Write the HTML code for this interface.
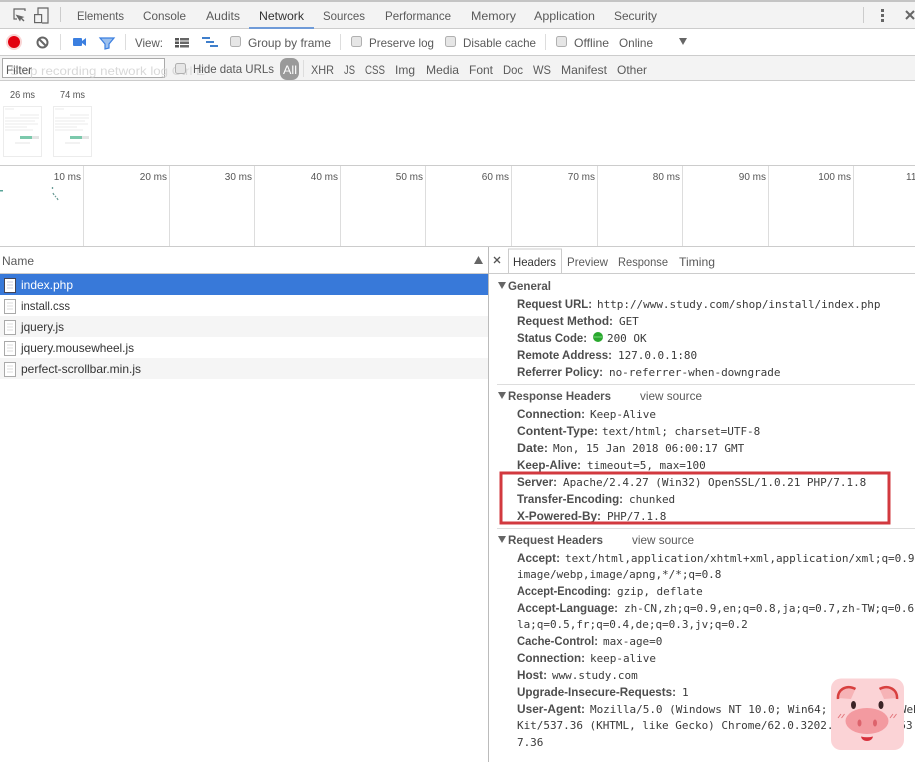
<!DOCTYPE html>
<html><head><meta charset="utf-8"><style>
html,body{margin:0;padding:0;background:#fff;width:915px;height:762px;overflow:hidden}
svg{display:block;filter:blur(.3px)}
text{font-family:"Liberation Sans",sans-serif;font-size:12px;fill:#4a4a4a}
.t{fill:#5a5a5a}
.d{fill:#333}
.k{font-weight:bold;fill:#4d4d4d;font-size:12px}
.v{font-family:"DejaVu Sans Mono",monospace;font-size:11px;fill:#3a3a3a;letter-spacing:-.03px}
.h{font-weight:bold;fill:#555}
.l{font-size:10px;fill:#555}
.cb{fill:#e6e6e6;stroke:#b0b0b0}
</style></head><body>
<svg width="915" height="762" viewBox="0 0 915 762" xmlns="http://www.w3.org/2000/svg">
<rect width="915" height="762" fill="#fff"/>
<!-- tab bar -->
<rect y="0" width="915" height="28" fill="#f3f3f3"/>
<rect y="0" width="915" height="2" fill="#c4c4c4"/>
<rect y="28" width="915" height="1" fill="#ccc"/>
<path d="M14 15V9h11v2M14 15v4h3" fill="none" stroke="#666" stroke-width="1.2"/>
<path d="M15.500 14.500l4.500 7 1-2.500 2.500 2.500 1-1-2.500-2.500 2.500-1z" fill="#666"/>
<path d="M38 14V8h10v15H42" fill="none" stroke="#666" stroke-width="1.2"/><rect x="34.600" y="14.600" width="7" height="8" fill="none" stroke="#666" stroke-width="1.2"/>
<rect x="60" y="7" width="1" height="15" fill="#ccc"/>
<text class="t" x="77" y="20" textLength="47" lengthAdjust="spacingAndGlyphs">Elements</text>
<text class="t" x="143" y="20" textLength="43" lengthAdjust="spacingAndGlyphs">Console</text>
<text class="t" x="206" y="20" textLength="34" lengthAdjust="spacingAndGlyphs">Audits</text>
<text class="d" x="259" y="20" textLength="45" lengthAdjust="spacingAndGlyphs">Network</text>
<text class="t" x="323" y="20" textLength="42" lengthAdjust="spacingAndGlyphs">Sources</text>
<text class="t" x="385" y="20" textLength="66" lengthAdjust="spacingAndGlyphs">Performance</text>
<text class="t" x="471" y="20" textLength="45" lengthAdjust="spacingAndGlyphs">Memory</text>
<text class="t" x="534" y="20" textLength="61" lengthAdjust="spacingAndGlyphs">Application</text>
<text class="t" x="614" y="20" textLength="43" lengthAdjust="spacingAndGlyphs">Security</text>
<rect x="249" y="27" width="65" height="2" fill="#6f9bd8"/>
<rect x="863" y="7" width="1" height="16" fill="#ccc"/>
<rect x="881" y="9" width="3" height="3" fill="#666"/><rect x="881" y="14" width="3" height="3" fill="#666"/><rect x="881" y="19" width="3" height="3" fill="#666"/>
<path d="M906 11l8 8M914 11l-8 8" stroke="#666" stroke-width="2"/>
<!-- row 2 -->
<circle cx="14" cy="42" r="8" fill="#f9d5d5"/><circle cx="14" cy="42" r="6" fill="#e2000f"/>
<circle cx="42.500" cy="42.500" r="5" fill="none" stroke="#666" stroke-width="2"/><path d="M39 39l7 7" stroke="#666" stroke-width="2"/>
<rect x="60" y="34" width="1" height="16" fill="#ddd"/>
<rect x="73" y="38" width="9" height="8" rx="1" fill="#3b7fe0"/><path d="M82 41l4-3v8l-4-3z" fill="#3b7fe0"/>
<path d="M100 38h14l-5 6v4l-4 1v-5z" fill="#9cc0ee" stroke="#3b7fe0" stroke-width="1.2"/>
<rect x="125" y="34" width="1" height="16" fill="#ddd"/>
<text class="t" x="135" y="47" textLength="28" lengthAdjust="spacingAndGlyphs">View:</text>
<path d="M175 38h4v2.500h-4zM175 41.500h4v2.500h-4zM175 45h4v2.500h-4z" fill="#555"/><path d="M180 38h9v2.500h-9zM180 41.500h9v2.500h-9zM180 45h9v2.500h-9z" fill="#666"/>
<path d="M202 37h8v2h-8zM206 41h8v2h-8zM210 45h8v2h-8z" fill="#3f7fcc"/>
<rect x="230.500" y="36.500" width="10" height="10" rx="2" class="cb"/>
<text class="t" x="248" y="47" textLength="83" lengthAdjust="spacingAndGlyphs">Group by frame</text>
<rect x="340" y="34" width="1" height="16" fill="#ddd"/>
<rect x="351.500" y="36.500" width="10" height="10" rx="2" class="cb"/>
<text class="t" x="369" y="47" textLength="65" lengthAdjust="spacingAndGlyphs">Preserve log</text>
<rect x="445.500" y="36.500" width="10" height="10" rx="2" class="cb"/>
<text class="t" x="463" y="47" textLength="73" lengthAdjust="spacingAndGlyphs">Disable cache</text>
<rect x="545" y="34" width="1" height="16" fill="#ddd"/>
<rect x="556.500" y="36.500" width="10" height="10" rx="2" class="cb"/>
<text class="t" x="574" y="47" textLength="35" lengthAdjust="spacingAndGlyphs">Offline</text>
<text class="t" x="619" y="47" textLength="34" lengthAdjust="spacingAndGlyphs">Online</text>
<path d="M679 38h8l-4 7z" fill="#666"/>
<rect y="55" width="915" height="1" fill="#ccc"/>
<!-- row 3 -->
<rect y="56" width="915" height="24" fill="#f3f3f3"/>
<rect y="80" width="915" height="1" fill="#ccc"/>
<rect x="2.500" y="58.500" width="162" height="19" fill="#fff" stroke="#aaa"/>
<text x="10" y="75" style="fill:#d8d8d8" textLength="195" lengthAdjust="spacingAndGlyphs">Stop recording network log   Ctrl E</text>
<text class="t" x="6" y="74" textLength="26" lengthAdjust="spacingAndGlyphs">Filter</text>
<rect x="175.500" y="63.500" width="10" height="10" rx="2" class="cb"/>
<text class="t" x="193" y="73" textLength="81" lengthAdjust="spacingAndGlyphs">Hide data URLs</text>
<rect x="280" y="58" width="19" height="22" rx="7" fill="#9a9a9a"/>
<text x="283" y="74" style="fill:#fff" textLength="14" lengthAdjust="spacingAndGlyphs">All</text>
<rect x="303" y="60" width="1" height="17" fill="#ddd"/>
<text class="t" x="311" y="74" textLength="23" lengthAdjust="spacingAndGlyphs">XHR</text>
<text class="t" x="344" y="74" textLength="11" lengthAdjust="spacingAndGlyphs">JS</text>
<text class="t" x="365" y="74" textLength="20" lengthAdjust="spacingAndGlyphs">CSS</text>
<text class="t" x="395" y="74" textLength="20" lengthAdjust="spacingAndGlyphs">Img</text>
<text class="t" x="426" y="74" textLength="33" lengthAdjust="spacingAndGlyphs">Media</text>
<text class="t" x="469" y="74" textLength="24" lengthAdjust="spacingAndGlyphs">Font</text>
<text class="t" x="503" y="74" textLength="20" lengthAdjust="spacingAndGlyphs">Doc</text>
<text class="t" x="533" y="74" textLength="18" lengthAdjust="spacingAndGlyphs">WS</text>
<text class="t" x="561" y="74" textLength="46" lengthAdjust="spacingAndGlyphs">Manifest</text>
<text class="t" x="617" y="74" textLength="30" lengthAdjust="spacingAndGlyphs">Other</text>
<!-- film strip -->
<text class="l" x="10" y="98" textLength="25" lengthAdjust="spacingAndGlyphs">26 ms</text>
<text class="l" x="60" y="98" textLength="25" lengthAdjust="spacingAndGlyphs">74 ms</text>
<rect x="3.500" y="106.500" width="38" height="50" fill="#fff" stroke="#ececec"/>
<path d="M5 109h9M20 115h19M5 118h34M5 121h30M5 124h33M5 127h22M5 130h28" stroke="#ebebeb"/>
<rect x="20" y="136" width="12" height="3" fill="#7cc9ac"/><rect x="32" y="136" width="7" height="3" fill="#e4e4e4"/>
<path d="M15 143h15" stroke="#e4e4e4"/>
<rect x="53.500" y="106.500" width="38" height="50" fill="#fff" stroke="#ececec"/>
<path d="M55 109h9M70 115h19M55 118h34M55 121h30M55 124h33M55 127h22M55 130h28" stroke="#ebebeb"/>
<rect x="70" y="136" width="12" height="3" fill="#7cc9ac"/><rect x="82" y="136" width="7" height="3" fill="#e4e4e4"/>
<path d="M65 143h15" stroke="#e4e4e4"/>
<!-- timeline -->
<rect y="165" width="915" height="1" fill="#ccc"/>
<rect y="246" width="915" height="1" fill="#ccc"/>
<path d="M83.500 166v80M169.500 166v80M254.500 166v80M340.500 166v80M425.500 166v80M511.500 166v80M597.500 166v80M682.500 166v80M768.500 166v80M853.500 166v80" stroke="#ddd"/>
<text class="l" x="81" y="180" text-anchor="end">10 ms</text>
<text class="l" x="167" y="180" text-anchor="end">20 ms</text>
<text class="l" x="252" y="180" text-anchor="end">30 ms</text>
<text class="l" x="338" y="180" text-anchor="end">40 ms</text>
<text class="l" x="423" y="180" text-anchor="end">50 ms</text>
<text class="l" x="509" y="180" text-anchor="end">60 ms</text>
<text class="l" x="595" y="180" text-anchor="end">70 ms</text>
<text class="l" x="680" y="180" text-anchor="end">80 ms</text>
<text class="l" x="766" y="180" text-anchor="end">90 ms</text>
<text class="l" x="851" y="180" text-anchor="end">100 ms</text>
<text class="l" x="906" y="180">11</text>
<rect x="0" y="190" width="3" height="1.500" fill="#5aa598"/>
<path d="M52.500 187v2M53 193l1 2M55 196l1 1M57 198l1 2" stroke="#6b9c96" stroke-width="1.300"/>
<!-- name panel -->
<text class="t" x="2" y="265" textLength="32" lengthAdjust="spacingAndGlyphs">Name</text>
<path d="M474 264l4.500-8 4.500 8z" fill="#666"/>
<rect y="273" width="489" height="1" fill="#ccc"/>
<rect y="274" width="489" height="21" fill="#3879d9"/>
<rect y="316" width="488" height="21" fill="#f5f5f5"/>
<rect y="358" width="488" height="21" fill="#f5f5f5"/>
<rect x="4.500" y="278.500" width="11" height="14" fill="#fff" stroke="#445"/>
<path d="M7 282h6M7 285h6M7 288h6" stroke="#ccd"/>
<g fill="#fff" stroke="#aaa"><rect x="4.500" y="299.500" width="11" height="14"/><rect x="4.500" y="320.500" width="11" height="14"/><rect x="4.500" y="341.500" width="11" height="14"/><rect x="4.500" y="362.500" width="11" height="14"/></g>
<path d="M7 303h6M7 306h6M7 309h6M7 324h6M7 327h6M7 330h6M7 345h6M7 348h6M7 351h6M7 366h6M7 369h6M7 372h6" stroke="#ddd"/>
<text x="21" y="289" style="fill:#fff" textLength="52" lengthAdjust="spacingAndGlyphs">index.php</text>
<text class="d" x="21" y="310" textLength="49" lengthAdjust="spacingAndGlyphs">install.css</text>
<text class="d" x="21" y="331" textLength="43" lengthAdjust="spacingAndGlyphs">jquery.js</text>
<text class="d" x="21" y="352" textLength="113" lengthAdjust="spacingAndGlyphs">jquery.mousewheel.js</text>
<text class="d" x="21" y="373" textLength="120" lengthAdjust="spacingAndGlyphs">perfect-scrollbar.min.js</text>
<rect x="488" y="247" width="1" height="515" fill="#bbb"/>
<!-- detail tabs -->
<path d="M494 257l6 6M500 257l-6 6" stroke="#555" stroke-width="1.300"/>
<rect x="489" y="273" width="426" height="1" fill="#ccc"/>
<path d="M508.500 273v-24h53v24" fill="#fff" stroke="#ccc"/>
<text class="d" x="513" y="266" textLength="43" lengthAdjust="spacingAndGlyphs">Headers</text>
<text class="t" x="567" y="266" textLength="41" lengthAdjust="spacingAndGlyphs">Preview</text>
<text class="t" x="618" y="266" textLength="50" lengthAdjust="spacingAndGlyphs">Response</text>
<text class="t" x="679" y="266" textLength="36" lengthAdjust="spacingAndGlyphs">Timing</text>
<!-- general -->
<path d="M498 282h8l-4 7z" fill="#666"/>
<text class="h" x="508" y="290" textLength="43" lengthAdjust="spacingAndGlyphs">General</text>
<text class="k" x="517" y="308" textLength="75" lengthAdjust="spacingAndGlyphs">Request URL:</text><text class="v" x="597" y="308">http://www.study.com/shop/install/index.php</text>
<text class="k" x="517" y="325" textLength="96" lengthAdjust="spacingAndGlyphs">Request Method:</text><text class="v" x="619" y="325">GET</text>
<text class="k" x="517" y="342" textLength="70" lengthAdjust="spacingAndGlyphs">Status Code:</text><circle cx="598" cy="337" r="5" fill="#29a82e"/><path d="M593.500 337h9" stroke="#7ad67d"/><text class="v" x="607" y="342">200 OK</text>
<text class="k" x="517" y="359" textLength="95" lengthAdjust="spacingAndGlyphs">Remote Address:</text><text class="v" x="618" y="359">127.0.0.1:80</text>
<text class="k" x="517" y="376" textLength="86" lengthAdjust="spacingAndGlyphs">Referrer Policy:</text><text class="v" x="609" y="376">no-referrer-when-downgrade</text>
<rect x="497" y="384" width="418" height="1" fill="#ddd"/>
<!-- response -->
<path d="M498 392h8l-4 7z" fill="#666"/>
<text class="h" x="508" y="400" textLength="103" lengthAdjust="spacingAndGlyphs">Response Headers</text>
<text class="t" x="640" y="400" textLength="62" lengthAdjust="spacingAndGlyphs">view source</text>
<text class="k" x="517" y="418" textLength="68" lengthAdjust="spacingAndGlyphs">Connection:</text><text class="v" x="590" y="418">Keep-Alive</text>
<text class="k" x="517" y="435" textLength="81" lengthAdjust="spacingAndGlyphs">Content-Type:</text><text class="v" x="602" y="435">text/html; charset=UTF-8</text>
<text class="k" x="517" y="452" textLength="31" lengthAdjust="spacingAndGlyphs">Date:</text><text class="v" x="553" y="452">Mon, 15 Jan 2018 06:00:17 GMT</text>
<text class="k" x="517" y="469" textLength="64" lengthAdjust="spacingAndGlyphs">Keep-Alive:</text><text class="v" x="587" y="469">timeout=5, max=100</text>
<text class="k" x="517" y="486" textLength="40" lengthAdjust="spacingAndGlyphs">Server:</text><text class="v" x="563" y="486">Apache/2.4.27 (Win32) OpenSSL/1.0.21 PHP/7.1.8</text>
<text class="k" x="517" y="503" textLength="106" lengthAdjust="spacingAndGlyphs">Transfer-Encoding:</text><text class="v" x="629" y="503">chunked</text>
<text class="k" x="517" y="520" textLength="84" lengthAdjust="spacingAndGlyphs">X-Powered-By:</text><text class="v" x="607" y="520">PHP/7.1.8</text>
<rect x="497" y="528" width="418" height="1" fill="#ddd"/>
<!-- request -->
<path d="M498 536h8l-4 7z" fill="#666"/>
<text class="h" x="508" y="544" textLength="95" lengthAdjust="spacingAndGlyphs">Request Headers</text>
<text class="t" x="632" y="544" textLength="62" lengthAdjust="spacingAndGlyphs">view source</text>
<text class="k" x="517" y="562" textLength="43" lengthAdjust="spacingAndGlyphs">Accept:</text><text class="v" x="565" y="562">text/html,application/xhtml+xml,application/xml;q=0.9</text>
<text class="v" x="517" y="578">image/webp,image/apng,*/*;q=0.8</text>
<text class="k" x="517" y="595" textLength="94" lengthAdjust="spacingAndGlyphs">Accept-Encoding:</text><text class="v" x="617" y="595">gzip, deflate</text>
<text class="k" x="517" y="612" textLength="101" lengthAdjust="spacingAndGlyphs">Accept-Language:</text><text class="v" x="624" y="612">zh-CN,zh;q=0.9,en;q=0.8,ja;q=0.7,zh-TW;q=0.6</text>
<text class="v" x="517" y="628">la;q=0.5,fr;q=0.4,de;q=0.3,jv;q=0.2</text>
<text class="k" x="517" y="645" textLength="81" lengthAdjust="spacingAndGlyphs">Cache-Control:</text><text class="v" x="603" y="645">max-age=0</text>
<text class="k" x="517" y="662" textLength="68" lengthAdjust="spacingAndGlyphs">Connection:</text><text class="v" x="590" y="662">keep-alive</text>
<text class="k" x="517" y="679" textLength="30" lengthAdjust="spacingAndGlyphs">Host:</text><text class="v" x="552" y="679">www.study.com</text>
<text class="k" x="517" y="696" textLength="159" lengthAdjust="spacingAndGlyphs">Upgrade-Insecure-Requests:</text><text class="v" x="682" y="696">1</text>
<text class="k" x="517" y="713" textLength="68" lengthAdjust="spacingAndGlyphs">User-Agent:</text><text class="v" x="590" y="713">Mozilla/5.0 (Windows NT 10.0; Win64; x64) AppleWeb</text>
<text class="v" x="517" y="729">Kit/537.36 (KHTML, like Gecko) Chrome/62.0.3202.94 Safari/53</text>
<text class="v" x="517" y="746">7.36</text>
<!-- red box -->
<rect x="501" y="473" width="388" height="50" fill="none" stroke="#d2393f" stroke-width="3"/>
<!-- pig -->
<rect x="831" y="678.500" width="73" height="71.500" rx="10" fill="#fbd3d6"/>
<path d="M838 698c0-8 8-13 17-8l-4 9z" fill="#f6b3b6"/>
<path d="M897 698c0-8-8-13-17-8l4 9z" fill="#f6b3b6"/>
<path d="M838 699c-1-9 8-15 17.500-10" fill="none" stroke="#d8403f" stroke-width="2.500"/>
<path d="M897 699c1-9-8-15-17.500-10" fill="none" stroke="#d8403f" stroke-width="2.500"/>
<ellipse cx="853.500" cy="705" rx="2.500" ry="4" fill="#3b2326"/>
<ellipse cx="881" cy="705" rx="2.500" ry="4" fill="#3b2326"/>
<path d="M838 718l3-4M841.500 718l3-4M890 718l3-4M893.500 718l3-4" stroke="#e2757b"/>
<ellipse cx="867" cy="721" rx="21.500" ry="13" fill="#f39aa0"/>
<ellipse cx="859.500" cy="723" rx="2" ry="3.500" fill="#dd636c"/>
<ellipse cx="875" cy="723" rx="2" ry="3.500" fill="#dd636c"/>
<path d="M861 736.500c4 1 8 1 12 0c-1 6-11 6-12 0z" fill="#d8303c"/>
</svg>
</body></html>
